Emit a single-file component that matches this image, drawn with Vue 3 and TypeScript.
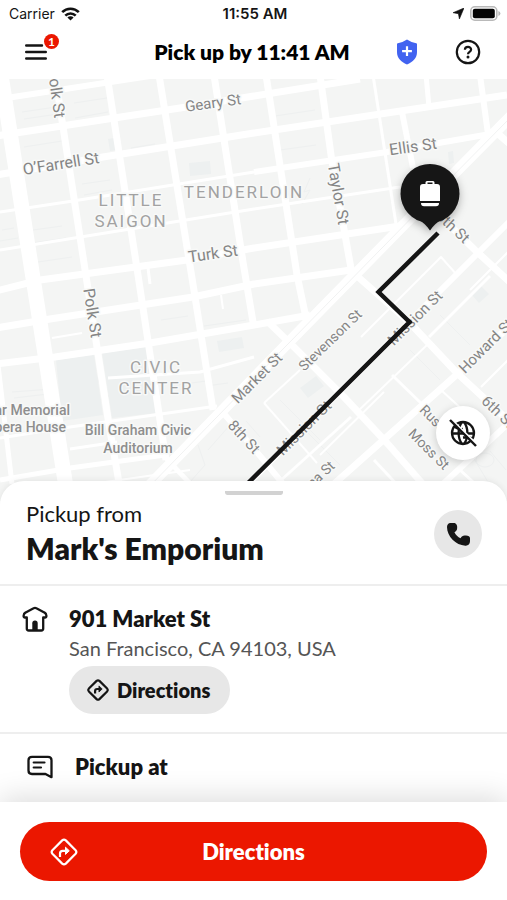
<script setup lang="ts">
import { ref } from 'vue'

interface Street {
  d: string
  w: number
}

interface Label {
  text: string
  x: number
  y: number
  angle: number
  size: number
}

const streets: Street[] = [
  // Streets running west to east
  { d: 'M0 99L13 97L150 76', w: 6 },
  { d: 'M-4 136L180 108L254 96L360 79', w: 7 },
  { d: 'M-4 175L103 157L254 133L507 95', w: 7 },
  { d: 'M0 212L73 201L254 172', w: 3 },
  { d: 'M254 172L387 152L496 133', w: 6 },
  { d: 'M0 250L254 209L400 187', w: 3 },
  { d: 'M-4 291L40 280L187 260L254 248L400 226', w: 7 },
  { d: 'M-4 328L50 319L193 297L254 284L351 270', w: 7 },
  { d: 'M-4 364L55 357L150 343L254 325L310 315', w: 7 },
  { d: 'M108 378L200 372L254 357', w: 3 },
  { d: 'M0 438L70 427L217 406', w: 3 },
  { d: 'M0 480L70 468L165 455', w: 5 },
  { d: 'M70 449L117 442', w: 3 },
  { d: 'M52 338L82 333', w: 2 },
  { d: 'M70 487L190 470', w: 2 },
  // Streets running north to south
  { d: 'M1 75L68 500', w: 15 },
  { d: 'M55 75L109 425L122 500', w: 7 },
  { d: 'M107 75L138 275L166 460', w: 7 },
  { d: 'M159 75L192 278L213 410', w: 7 },
  { d: 'M214 75L243 262L254 328', w: 7 },
  { d: 'M266 75L297 275L306 318', w: 7 },
  { d: 'M320 75L332 162L352 274', w: 7 },
  { d: 'M373 75L396 224', w: 3 },
  { d: 'M402 112L413 168', w: 6 },
  { d: 'M426 75L429 107', w: 5 },
  { d: 'M480 75L488 134', w: 6 },
  { d: 'M-2 365L12 484', w: 5 },
  { d: 'M148 268L150 284', w: 3 },
  { d: 'M221 295L223 309', w: 2 },
  // Streets running north-east
  { d: 'M512 115L430 198L286 345L145 490', w: 11 },
  { d: 'M512 219L409 322L240 492', w: 6 },
  { d: 'M512 324L454 377L325 492', w: 7 },
  { d: 'M512 420L430 496', w: 6 },
  { d: 'M361 337L441 257L457 275', w: 2 },
  { d: 'M279 482L351 417', w: 3 },
  { d: 'M357 412L427 345', w: 2 },
  { d: 'M429 337L490 276', w: 3 },
  { d: 'M481 387L512 356', w: 2 },
  { d: 'M264 403L300 370', w: 2 },
  { d: 'M320 455L384 392', w: 2 },
  { d: 'M470 290L510 250', w: 2 },
  // Streets running south-east
  { d: 'M220 409L261 457L288 490', w: 6 },
  { d: 'M267 321L294 347L344 397L387 443L428 490', w: 7 },
  { d: 'M348 268L409 322L457 373L512 424', w: 7 },
  { d: 'M432 208L475 250L512 284', w: 7 },
  { d: 'M496 132L512 146', w: 7 },
  { d: 'M392 375L425 407', w: 3 },
  { d: 'M441 390L465 412', w: 2 },
  { d: 'M264 403L317 463', w: 2 },
  { d: 'M374 460L402 490', w: 3 },
  { d: 'M166 458L196 490', w: 5 },
  { d: 'M460 470L484 492', w: 3 },
]

const blocks: string[] = [
  '56,360 94,355 103,415 62,421',
  '102,353 147,347 157,413 112,418',
  '189,163 210,161 211,174 190,176',
  '217,341 242,337 244,348 219,352',
  '108,139 114,138 116,150 110,151',
  '300,388 316,376 324,386 308,398',
  '448,152 453,151 454,163 449,164',
  '471,294 481,286 489,294 479,303',
]

const plots: string[] = [
  'M22 112L56 107M24 119L58 114M24 147L62 141M75 118L108 112M74 103L107 98',
  'M33 230L62 226M32 243L66 238M38 262L72 257M2 230L14 228M0 241L18 238',
  'M82 184L110 180M84 195L112 190M131 148L155 144M186 143L212 139',
  'M275 116L315 110M280 150L316 145M310 178L304 192L310 190L302 204',
  'M40 372L55 371M12 392L52 389M14 398L48 394M108 385L150 379M108 396L150 391',
  'M117 353L121 381M130 351L134 379M122 392L127 416M136 391L141 414',
  'M60 372Q78 345 94 372T94 408Q78 418 64 410',
  'M161 320L188 316M204 326L246 320M206 386L228 383M170 386L206 381',
  'M198 445L205 465L190 482M230 425L208 450M246 421L260 437',
  'M300 425L340 465M280 400L320 440M410 350L440 380M440 315L470 345',
  'M476 460a9 7 0 1 0 18 0a9 7 0 1 0 -18 0M490 451L506 470M470 452L488 482',
]

const streetLabels: Label[] = [
  { text: 'Polk St', x: 56, y: 93, angle: 82, size: 16 },
  { text: 'Geary St', x: 213, y: 103, angle: -8, size: 15 },
  { text: 'O’Farrell St', x: 61, y: 164, angle: -9, size: 16 },
  { text: 'Ellis St', x: 413, y: 147, angle: -8, size: 16 },
  { text: 'Taylor St', x: 338, y: 194, angle: 80, size: 16 },
  { text: 'Turk St', x: 213, y: 254, angle: -8, size: 16 },
  { text: 'Polk St', x: 92, y: 313, angle: 81, size: 16 },
  { text: '5th St', x: 453, y: 227, angle: 43, size: 15 },
  { text: 'Market St', x: 257, y: 378, angle: -45, size: 15 },
  { text: 'Stevenson St', x: 330, y: 340, angle: -44, size: 14 },
  { text: 'Mission St', x: 415, y: 318, angle: -45, size: 15 },
  { text: 'Mission St', x: 304, y: 428, angle: -45, size: 15 },
  { text: 'Howard St', x: 486, y: 346, angle: -45, size: 15 },
  { text: '8th St', x: 244, y: 437, angle: 47, size: 15 },
  { text: '6th St', x: 498, y: 412, angle: 44, size: 15 },
  { text: 'Russ St', x: 439, y: 424, angle: 45, size: 14 },
  { text: 'Moss St', x: 429, y: 449, angle: 45, size: 14 },
  { text: 'Natoma St', x: 308, y: 486, angle: -43, size: 14 },
]

const alerts = ref<number>(1)
</script>

<template>
  <div class="page">
    <header class="top">
      <div class="status">
        <span class="carrier">
          Carrier
          <svg width="19" height="14" viewBox="0 0 19 14" aria-hidden="true">
            <g fill="none" stroke="#111" stroke-width="2.6">
              <path d="M1.2 5.2a11.8 11.8 0 0 1 16.6 0" />
              <path d="M4.3 8.6a7.4 7.4 0 0 1 10.4 0" />
            </g>
            <path d="M9.5 13.6L6.4 10.5a4.4 4.4 0 0 1 6.2 0z" fill="#111" />
          </svg>
        </span>
        <span class="clock">11:55 AM</span>
        <span class="power">
          <svg width="11" height="11" viewBox="0 0 11 11" aria-hidden="true">
            <path d="M11 0L6.4 11L5.4 5.7L0 4.7z" fill="#111" stroke="#111" stroke-width=".6" />
          </svg>
          <svg width="31" height="15" viewBox="0 0 31 15" aria-hidden="true">
            <rect x=".8" y=".8" width="26" height="13.4" rx="4" fill="#fff" stroke="#b9b9b9" stroke-width="1.6" />
            <rect x="2.8" y="2.8" width="22" height="9.4" rx="2" fill="#050505" />
            <path d="M28.4 5v5q2-.8 2-2.5t-2-2.5z" fill="#b9b9b9" />
          </svg>
        </span>
      </div>
      <nav class="bar">
        <div class="side">
          <button class="icon-button" type="button" aria-label="Menu">
            <svg width="22" height="16" viewBox="0 0 22 16" aria-hidden="true">
              <path d="M1.2 1.5H17M1.2 8H20.8M1.2 14.5H20.8" stroke="#151515" stroke-width="2.4" stroke-linecap="round" />
            </svg>
            <span class="badge">{{ alerts }}</span>
          </button>
        </div>
        <h1 class="title">Pick up by 11:41 AM</h1>
        <div class="side end">
          <button class="icon-button" type="button" aria-label="Safety">
            <svg width="22" height="26" viewBox="0 0 22 26" aria-hidden="true">
              <path d="M11 .6Q15 3.5 20.2 4.2Q21 4.3 21 5.2V13C21 19 17 23 11 25.4C5 23 1 19 1 13V5.2Q1 4.3 1.8 4.2Q7 3.5 11 .6z" fill="#4263f0" />
              <path d="M11 7.2V17M6.1 12.1H15.9" stroke="#fff" stroke-width="2.2" />
            </svg>
          </button>
          <button class="icon-button" type="button" aria-label="Help">
            <svg width="26" height="26" viewBox="0 0 26 26" fill="none" stroke="#151515" aria-hidden="true">
              <circle cx="13" cy="13" r="11.2" stroke-width="2.2" />
              <path d="M9.9 10.7C9.9 6.9 16.1 6.9 16.1 10.6C16.1 13 13 12.7 13 15.2" stroke-width="2.2" />
              <circle cx="13" cy="18" r="1.5" fill="#151515" stroke="none" />
            </svg>
          </button>
        </div>
      </nav>
    </header>

    <main class="map">
      <svg class="canvas" viewBox="0 79 507 422" preserveAspectRatio="xMidYMid slice" role="img" aria-label="Route map">
        <defs>
          <filter id="pin-shadow" x="-40%" y="-40%" width="180%" height="180%">
            <feDropShadow dx="0" dy="3" stdDeviation="4" flood-color="#000" flood-opacity=".3" />
          </filter>
        </defs>
        <rect y="79" width="507" height="422" fill="#f4f5f4" />
        <polygon v-for="b in blocks" :key="b" :points="b" fill="#edf0f0" />
        <path v-for="p in plots" :key="p" :d="p" class="plot" />
        <path v-for="s in streets" :key="s.d" :d="s.d" :stroke-width="s.w" class="street" />
        <path d="M512 116L430 199L286 346L145 491" fill="none" stroke="#f1f2f2" stroke-width="1" />

        <g class="street-label">
          <text
            v-for="(l, i) in streetLabels"
            :key="i"
            :transform="`translate(${l.x} ${l.y}) rotate(${l.angle})`"
            :font-size="l.size"
            dy="5"
          >{{ l.text }}</text>
        </g>
        <g class="area-label">
          <text x="131" y="206">LITTLE</text>
          <text x="131" y="227">SAIGON</text>
          <text x="244" y="198">TENDERLOIN</text>
          <text x="156" y="373">CIVIC</text>
          <text x="156" y="394">CENTER</text>
        </g>
        <g class="place-label">
          <text x="70" y="415" class="flush">War Memorial</text>
          <text x="66" y="432" class="flush">Opera House</text>
          <text x="138" y="435">Bill Graham Civic</text>
          <text x="138" y="453">Auditorium</text>
        </g>

        <path d="M438 233L378.5 292L409.5 322L230 501" fill="none" stroke="#151515" stroke-width="4.5" />

        <g filter="url(#pin-shadow)">
          <path d="M430 164a29.5 29.5 0 0 1 9 57.6q-3 1-9 8.9q-6-7.9-9-8.9a29.5 29.5 0 0 1 9-57.6z" fill="#151515" />
        </g>
        <path d="M423 184h2.5v-1.5a1.5 1.5 0 0 1 1.5-1.5h6a1.5 1.5 0 0 1 1.5 1.5v1.5h2.5a3 3 0 0 1 3 3v14h-20v-14a3 3 0 0 1 3-3z" fill="#fff" />
        <path d="M427.5 182.5h5v1.5h-5z" fill="#151515" />
        <path d="M421 203h18q0 3.2-3 3.2h-12q-3 0-3-3.2z" fill="#fff" />
      </svg>

      <button class="fab" type="button" aria-label="Language off">
        <svg width="28" height="28" viewBox="0 0 28 28" fill="none" stroke="#151515" stroke-width="2.3" aria-hidden="true">
          <circle cx="14" cy="14" r="11" />
          <path d="M3 14.5H25M13 3C8.5 9 8.5 19 13 25M15 3C19.5 9 19.5 19 15 25M5 7.5Q9 10.5 14 10M23 19Q19 18 14 18.5" />
          <path d="M2.5 .5L28.5 26" stroke="#fff" stroke-width="2" />
          <path d="M1 1L27 27" stroke-width="2.4" />
        </svg>
      </button>
    </main>

    <section class="sheet">
      <div class="grip"></div>
      <div class="store">
        <div>
          <p class="lead">Pickup from</p>
          <h2 class="name">Mark's Emporium</h2>
        </div>
        <button class="call" type="button" aria-label="Call store">
          <svg width="23" height="23" viewBox="0 0 68 68" aria-hidden="true">
            <path d="M10 0H20C28 0 31 8 30 15C30 21 27 25 22 27C26 35 32 41 40 45C43 40 47 38 52 37C61 36 68 38 68 45V54C68 62 62 68 54 67C26 66 0 40 0 12C0 5 4 0 10 0z" fill="#151515" />
          </svg>
        </button>
      </div>

      <div class="address">
        <svg class="home" width="26" height="26" viewBox="0 0 26 26" fill="none" stroke="#151515" stroke-width="2.3" stroke-linejoin="round" stroke-linecap="round" aria-hidden="true">
          <path d="M4.8 11.5H3Q1.5 11.5 1.6 9.7Q1.7 7.4 3.7 6.4L11.6 2.2Q13 1.4 14.4 2.2L22.3 6.4Q24.3 7.4 24.4 9.7Q24.5 11.5 23 11.5H21.2V22.5Q21.2 24.5 19.2 24.5H6.8Q4.8 24.5 4.8 22.5z" />
          <path d="M10.3 24.5V17.2a2.7 2.7 0 0 1 5.4 0V24.5z" fill="#151515" stroke="none" />
        </svg>
        <div>
          <h3 class="street-name">901 Market St</h3>
          <p class="city">San Francisco, CA 94103, USA</p>
          <button class="chip" type="button">
            <svg width="22" height="22" viewBox="0 0 28 28" fill="none" stroke="#151515" stroke-width="2.8" stroke-linejoin="round" aria-hidden="true">
              <path d="M12.2 2.4Q14 .9 15.8 2.4L25.6 12.2Q27.1 14 25.6 15.8L15.8 25.6Q14 27.1 12.2 25.6L2.4 15.8Q.9 14 2.4 12.2z" />
              <path d="M10.3 18.5V15.5Q10.3 12.7 13 12.7H16" />
              <path d="M15.2 8.8L19.3 12.7L15.2 16.6z" fill="#151515" stroke-width="1" />
            </svg>
            Directions
          </button>
        </div>
      </div>

      <div class="note">
        <svg width="26" height="24" viewBox="0 0 26 24" fill="none" stroke="#151515" stroke-width="2.3" stroke-linejoin="round" stroke-linecap="round" aria-hidden="true">
          <path d="M5 1.8H21Q24.5 1.8 24.5 5.3V22.2L18.5 19H5Q1.5 19 1.5 15.5V5.3Q1.5 1.8 5 1.8z" />
          <path d="M6.7 7.5H17.5M6.7 12.5H14" stroke-width="2.2" />
        </svg>
        <h3 class="note-title">Pickup at</h3>
      </div>
    </section>

    <footer class="footer">
      <button class="primary" type="button">
        <svg width="28" height="28" viewBox="0 0 28 28" fill="none" stroke="#fff" stroke-width="2.2" stroke-linejoin="round" aria-hidden="true">
          <path d="M12.2 2.4Q14 .9 15.8 2.4L25.6 12.2Q27.1 14 25.6 15.8L15.8 25.6Q14 27.1 12.2 25.6L2.4 15.8Q.9 14 2.4 12.2z" />
          <path d="M10 19V15.5Q10 12.8 12.7 12.8H16" />
          <path d="M15.5 9.2L19.3 12.8L15.5 16.4z" fill="#fff" stroke-width="1" />
        </svg>
        <span>Directions</span>
      </button>
    </footer>
  </div>
</template>

<style>
body {
  margin: 0;
  background: #fff;
}
</style>

<style scoped>
.page {
  display: flex;
  flex-direction: column;
  min-height: 100vh;
  background: #fff;
  color: #151515;
  font-family: Lato, "Open Sans", sans-serif;
  font-variant-ligatures: none;
}

h1,
h2,
h3,
p {
  margin: 0;
}

button {
  border: 0;
  padding: 0;
  color: inherit;
  font-family: inherit;
  font-variant-ligatures: inherit;
  cursor: pointer;
}

svg {
  display: block;
  flex: none;
}

.status {
  display: grid;
  grid-template-columns: 1fr auto 1fr;
  align-items: center;
  height: 27px;
  padding: 0 6px 0 9px;
  font: 14px/18px Inter, "Liberation Sans", sans-serif;
}

.carrier,
.power {
  display: flex;
  align-items: center;
  gap: 6px;
}

.power {
  justify-content: flex-end;
}

.clock {
  font-size: 15px;
  font-weight: 600;
}

.bar {
  display: grid;
  grid-template-columns: 1fr auto 1fr;
  align-items: center;
  height: 52px;
  padding: 0 17px 2px 14px;
  box-sizing: border-box;
}

.side {
  display: flex;
  gap: 17px;
}

.end {
  justify-content: flex-end;
}

.icon-button {
  position: relative;
  display: grid;
  place-items: center;
  width: 44px;
  height: 44px;
  background: none;
}

.badge {
  position: absolute;
  top: 4px;
  right: -1px;
  width: 15px;
  height: 15px;
  border-radius: 50%;
  background: #eb1700;
  color: #fff;
  font-size: 12px;
  font-weight: 700;
  line-height: 15px;
  text-align: center;
}

.title {
  font-size: 21px;
  font-weight: 800;
  line-height: 28px;
  color: #000;
}

.map {
  position: relative;
  flex: 1;
  min-height: 320px;
  overflow: hidden;
}

.canvas {
  position: absolute;
  inset: 0;
  width: 100%;
  height: 100%;
}

.street {
  fill: none;
  stroke: #fff;
  stroke-linejoin: round;
}

.plot {
  fill: none;
  stroke: #eef0f0;
  stroke-width: 1;
}

.street-label,
.place-label,
.area-label {
  font-family: Roboto, sans-serif;
  text-anchor: middle;
  paint-order: stroke;
  stroke: #f8f9f8;
  stroke-width: 3px;
  stroke-linejoin: round;
}

.street-label {
  fill: #858585;
}

.place-label {
  fill: #8e8e8e;
  font-size: 14px;
  font-weight: 500;
}

.flush {
  text-anchor: end;
}

.area-label {
  fill: #a2a2a2;
  font-size: 17px;
  letter-spacing: 2px;
}

.fab {
  position: absolute;
  right: 17px;
  bottom: 41px;
  display: grid;
  place-items: center;
  width: 54px;
  height: 54px;
  border-radius: 50%;
  background: #fff;
  box-shadow: 0 2px 8px rgba(0, 0, 0, 0.18);
}

.sheet {
  position: relative;
  margin-top: -20px;
  border-radius: 24px 24px 0 0;
  background: #fff;
  box-shadow: 0 -1px 6px rgba(0, 0, 0, 0.07);
}

.grip {
  width: 58px;
  height: 4px;
  margin: 0 auto;
  border-top: 10px solid transparent;
  border-radius: 2px;
  background: #d2d2d2;
  background-clip: padding-box;
}

.store {
  display: flex;
  align-items: center;
  justify-content: space-between;
  padding: 5px 25px 16px 26px;
  border-bottom: 2px solid #eee;
}

.lead {
  font-size: 22px;
  line-height: 28px;
}

.name {
  font-size: 30px;
  font-weight: 800;
  line-height: 40px;
}

.call {
  display: grid;
  place-items: center;
  width: 48px;
  height: 48px;
  border-radius: 50%;
  background: #e7e7e7;
}

.address {
  display: flex;
  gap: 21px;
  padding: 18px 22px;
  border-bottom: 2px solid #eee;
}

.home {
  margin-top: 2px;
}

.street-name,
.note-title {
  font-size: 22px;
  font-weight: 800;
  line-height: 30px;
}

.city {
  color: #555;
  font-size: 20px;
  line-height: 28px;
}

.chip {
  display: flex;
  align-items: center;
  gap: 8px;
  height: 48px;
  margin-top: 4px;
  padding: 0 20px 0 18px;
  border-radius: 24px;
  background: #e7e7e7;
  font-size: 20px;
  font-weight: 800;
}

.note {
  display: flex;
  align-items: center;
  gap: 22px;
  padding: 18px 27px 20px;
}

.footer {
  position: relative;
  padding: 20px 20px 19px;
  background: #fff;
  box-shadow: 0 -4px 28px rgba(0, 0, 0, 0.14);
}

.primary {
  display: grid;
  grid-template-columns: 28px 1fr 28px;
  align-items: center;
  width: 100%;
  height: 59px;
  padding: 0 30px;
  border-radius: 30px;
  background: #eb1700;
  color: #fff;
  font-size: 22px;
  font-weight: 800;
}
</style>
